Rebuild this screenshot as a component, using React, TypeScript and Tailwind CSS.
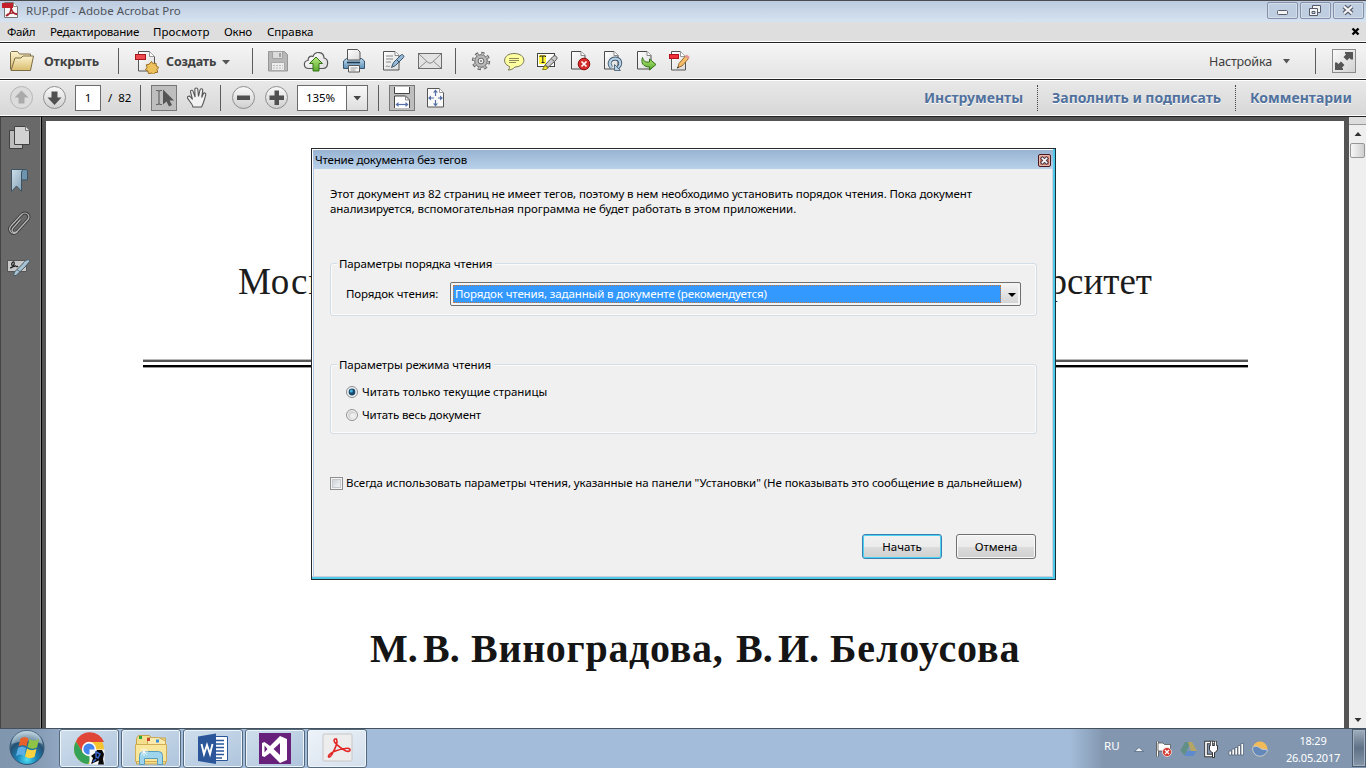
import type { ReactNode } from "react";

function Art({ box, children, className = "" }: { box: [number, number, number, number]; children: ReactNode; className?: string }) {
  return (
    <svg width={box[2]} height={box[3]} viewBox={box.join(" ")} className={"block shrink-0 " + className} fill="none" aria-hidden="true">
      {children}
    </svg>
  );
}

const Sep = ({ className = "" }: { className?: string }) => <div className={"h-[26px] w-px shrink-0 bg-[#5c5c5c] " + className} />;

const Sheet = ({ x, y = 51.5 }: { x: number; y?: number }) => (
  <>
    <path d={`M${x} ${y}h9.5l4 4v13.5h-13.5z`} fill="url(#paper)" stroke="#4a4a4a" />
    <path d={`M${x + 9.5} ${y}v4h4`} fill="#fff" stroke="#8a8a8a" />
  </>
);

const Defs = () => (
  <svg width="0" height="0" className="absolute" aria-hidden="true">
    <defs>
      <linearGradient id="paper" x1="0" y1="0" x2="1" y2="1"><stop stopColor="#fff" /><stop offset="1" stopColor="#dcdcdc" /></linearGradient>
      <linearGradient id="folder" x1="0" y1="0" x2="0" y2="1"><stop stopColor="#fdf3cf" /><stop offset="1" stopColor="#d9bc6d" /></linearGradient>
      <linearGradient id="round" x1="0" y1="0" x2="0" y2="1"><stop stopColor="#fafafa" /><stop offset="1" stopColor="#cfcfcf" /></linearGradient>
      <linearGradient id="steel" x1="0" y1="0" x2="0" y2="1"><stop stopColor="#bcd8ec" /><stop offset="1" stopColor="#5e90b8" /></linearGradient>
      <linearGradient id="green" x1="0" y1="0" x2="0" y2="1"><stop stopColor="#b9ea7e" /><stop offset="1" stopColor="#58a92a" /></linearGradient>
      <linearGradient id="sage" x1="0" y1="0" x2="1" y2="1"><stop stopColor="#cfe0ea" /><stop offset="1" stopColor="#7e9db4" /></linearGradient>
      <radialGradient id="orb" cx=".5" cy=".85" r=".8"><stop stopColor="#4fe0f4" /><stop offset=".35" stopColor="#1b84b8" /><stop offset=".7" stopColor="#245073" /><stop offset="1" stopColor="#a8bfcc" /></radialGradient>
    </defs>
  </svg>
);

function TitleBar() {
  return (
    <header className="flex h-[22px] shrink-0 items-start border-t border-[#4c4c50] bg-gradient-to-b from-[#bccbdf] to-[#d6e3f1]">
      <Art box={[2, 1, 18, 19]} className="ml-[2px]">
        <path d="M4.500 2.500h9l4 4v11h-13z" fill="#f8f8f8" stroke="#777" />
        <path d="M13.500 2.500v4h4" stroke="#888" fill="#fff" />
        <path d="M2 3h11v5h-11z" fill="#c3202b" />
        <path d="M6 16c3-1 5-4 5-8.500c1 5 3 6.500 6 7M6 16c2-3 7-3.500 11-2" stroke="#a5222a" strokeWidth="1.400" />
      </Art>
      <span className="ml-[6px] mt-[1px] text-[11.500px] leading-[18px] tracking-[.06px] text-[#4e535b]">RUP.pdf - Adobe Acrobat Pro</span>
      <div className="ml-auto mr-[2px] mt-[1px] flex gap-[2px]">
        <div className="h-[17px] w-[31px] rounded-[2px] border border-[#8490a8] bg-[#bfcde0] shadow-[inset_0_0_0_1px_#d4deeb]">
          <Art box={[1268, 3, 29, 15]}><rect x="1277.500" y="10.500" width="10" height="4" rx="1" fill="#f4f4f4" stroke="#565c6b" /></Art>
        </div>
        <div className="h-[17px] w-[31px] rounded-[2px] border border-[#8490a8] bg-[#bfcde0] shadow-[inset_0_0_0_1px_#d4deeb]">
          <Art box={[1301, 3, 29, 15]}>
            <path d="M1312.500 5.500h8v7h-8z" fill="#f4f4f4" stroke="#565c6b" />
            <path d="M1309.500 8.500h8v7h-8z" fill="#f4f4f4" stroke="#565c6b" />
            <path d="M1312 11.500h3v2h-3z" fill="#c8d4e4" stroke="#565c6b" />
          </Art>
        </div>
        <div className="h-[17px] w-[31px] rounded-[2px] border border-[#8490a8] bg-[#bfcde0] shadow-[inset_0_0_0_1px_#d4deeb]">
          <Art box={[1334, 3, 29, 15]}>
            <path d="M1344 6.500l8 7M1352 6.500l-8 7" stroke="#565c6b" strokeWidth="4.400" />
            <path d="M1344 6.500l8 7M1352 6.500l-8 7" stroke="#f6f6f6" strokeWidth="2.200" />
          </Art>
        </div>
      </div>
    </header>
  );
}

function MenuBar() {
  return (
    <nav className="flex h-[20px] shrink-0 items-center border-b border-white bg-[#dedede] pl-[7px] text-[11.500px] leading-[18px] text-black">
      <span className="w-[43px] tracking-[-.4px]">Файл</span>
      <span className="w-[103px] tracking-[-.23px]">Редактирование</span>
      <span className="w-[71px] tracking-[.1px]">Просмотр</span>
      <span className="w-[43px] tracking-[-.2px]">Окно</span>
      <span>Справка</span>
      <Art box={[1350, 26, 12, 12]} className="ml-auto mr-[4px]"><path d="M1352.500 28.500l6 6M1358.500 28.500l-6 6" stroke="#000" strokeWidth="2.400" /></Art>
    </nav>
  );
}

function MainToolbar() {
  return (
    <div className="flex h-[38px] shrink-0 items-start border-y border-t-[#222] border-b-[#222] bg-gradient-to-b from-[#f5f5f5] to-[#e4e4e4] pl-[10px] pt-[5px] shadow-[inset_0_1px_0_#fff,inset_0_-1px_0_#fff]">
      <Art box={[10, 48, 24, 26]}>
        <path d="M10.500 69.500v-17l1-1h6l2 2.500h11v4" fill="url(#folder)" stroke="#7d6d45" />
        <path d="M11 70.500l4-12.500h6l2-2h10.500l-3 14.500z" fill="url(#folder)" stroke="#7d6d45" />
      </Art>
      <span className="ml-[10px] w-[58px] text-[12.500px] font-bold leading-[27px] tracking-[-.15px] text-[#404040]">Открыть</span>
      <Sep className="ml-[16px]" />
      <Art box={[135, 48, 24, 26]} className="ml-[16px]">
        <path d="M138.500 51.500h11l5 5v14.500h-16z" fill="url(#paper)" stroke="#555" />
        <path d="M149.500 51.500v5h5" fill="#fff" stroke="#999" />
        <rect x="135.500" y="54.500" width="10" height="5" fill="#ee4a50" stroke="#a6171c" />
        <path d="M151.500 61.500l1.700 2.300 2.800-.6.300 2.900 2.500 1.300-1.800 2.200.7 2.700-2.800.3-1.500 2-2.200-1.600-2.700.8-.6-2.700-2.500-1.300 1.600-2.300-.7-2.700 2.800-.5z" fill="#edc25c" stroke="#9a6e22" />
      </Art>
      <span className="ml-[7px] w-[50px] text-[12.500px] font-bold leading-[27px] tracking-[-.15px] text-[#404040]">Создать</span>
      <Art box={[223, 48, 8, 26]} className="ml-[6px]"><path d="M223 60h8l-4 4.500z" fill="#555" /></Art>
      <Sep className="ml-[22px]" />
      <Art box={[267, 48, 22, 26]} className="ml-[14px]">
        <path d="M268.500 51.500h16l3 3v16.500h-19z" fill="#b7b7b7" stroke="#979797" />
        <path d="M272.500 51.500h10v7h-10z" fill="#dcdcdc" stroke="#a2a2a2" /><path d="M279 53h2v4h-2z" fill="#a2a2a2" />
        <path d="M271.500 62.500h13v8h-13z" fill="#ededed" stroke="#a8a8a8" /><path d="M273 65.500h10M273 68h10" stroke="#bbb" strokeDasharray="2 1" />
      </Art>
      <Art box={[303, 48, 26, 26]} className="ml-[14px]">
        <path d="M309 68.500c-6 0-6-7.500-1-8c0-4 3-5 5-4c2-6 11-5 11 1.500c5 1 5 10-1 10.500z" fill="url(#paper)" stroke="#555" strokeWidth="1.200" />
        <path d="M316 57l6.500 6.500h-3.500v7.500h-6v-7.500h-3.500z" fill="url(#green)" stroke="#35741b" />
      </Art>
      <Art box={[342, 48, 25, 26]} className="ml-[13px]">
        <path d="M343.500 61l3-2.500h15l3 2.500v7.500h-21z" fill="url(#steel)" stroke="#355570" />
        <path d="M347.500 49.500h10l2.500 2.500v8h-12.500z" fill="url(#paper)" stroke="#555" />
        <path d="M347 62.500h13" stroke="#22384b" strokeWidth="1.600" />
        <path d="M348.500 65.500h11v6.500h-11z" fill="#f7f7f7" stroke="#555" /><path d="M350.500 68h7M350.500 70h5" stroke="#999" />
      </Art>
      <Art box={[382, 48, 23, 26]} className="ml-[15px]">
        <path d="M383.500 51.500h11.500l4 4v14.500h-15.500z" fill="url(#paper)" stroke="#555" />
        <path d="M395 51.500v4h4" fill="#fff" stroke="#888" />
        <path d="M386 56h7M386 59h7M386 62h5M386 67c1-3 2 1 4-1" stroke="#888" />
        <path d="M391.500 67.500l2-5 8-8c2 0 3 2 2 3l-8 8z" fill="#94b8d8" stroke="#3e5468" /><path d="M396.500 59.500l3 3" stroke="#3e5468" />
      </Art>
      <Art box={[417, 48, 26, 26]} className="ml-[12px]">
        <rect x="418.500" y="53.500" width="23" height="15" fill="#e3e3e3" stroke="#6d6d6d" />
        <path d="M419 54l9 8.500q2 1.500 4 0l9-8.500M419 68l8-7M441 68l-8-7" stroke="#8b8b8b" />
      </Art>
      <Sep className="ml-[12px]" />
      <Art box={[471, 48, 20, 26]} className="ml-[15px]">
        <circle cx="481" cy="61" r="7.800" stroke="#666" strokeWidth="2.800" strokeDasharray="3.200 2.926" />
        <circle cx="481" cy="61" r="6.300" fill="#b9b9b9" stroke="#666" />
        <circle cx="481" cy="61" r="7.200" stroke="#b9b9b9" strokeWidth="2" strokeDasharray="2 3.655" strokeDashoffset="-.5" />
        <circle cx="481" cy="61" r="2.900" fill="#eee" stroke="#666" /><circle cx="481" cy="61" r="1" fill="#777" />
      </Art>
      <Art box={[503, 48, 22, 26]} className="ml-[12px]">
        <path d="M514 53.500c13 0 13 13 1 13.500c-2 2-4 3-7 3c1-1 2-2 1.500-3.500c-8-3-6-13 4.500-13z" fill="#ffffa0" stroke="#777555" />
        <path d="M509 58.500h10M509 60.500h10M509 62.500h7" stroke="#8c8858" />
      </Art>
      <Art box={[536, 48, 22, 26]} className="ml-[11px]">
        <rect x="537.500" y="53.500" width="17" height="13" fill="#fff" stroke="#444" /><path d="M539 55h7v9h-7z" fill="#fff338" />
        <path d="M540 57v-1h5.500v1M542.800 56v6.500M541.500 62.500h3" stroke="#222" />
        <path d="M544.500 65.500l8-8.500c2-3 6 0 4 2.500l-8.500 8z" fill="#c9c9c9" stroke="#555" /><path d="M545 64.500l4 3.500M551 58.500l4 3.500" stroke="#666" />
        <path d="M542.500 69.500l2.500-4 3 2.500-2 1.500z" fill="#f5e52a" stroke="#8a821f" />
      </Art>
      <Art box={[570, 48, 21, 26]} className="ml-[12px]">
        <Sheet x={571.5} />
        <circle cx="584" cy="64" r="5.800" fill="#d82b2b" stroke="#8d1111" /><path d="M581.500 61.500l5 5M586.500 61.500l-5 5" stroke="#fff" strokeWidth="1.700" />
      </Art>
      <Art box={[603, 48, 20, 26]} className="ml-[12px]">
        <Sheet x={604.5} />
        <path d="M611.500 67.500c-4-4-1-9 4-9c5 .5 6.500 5.500 2.500 9" stroke="#3e566c" strokeWidth="3.800" />
        <path d="M611.500 67.500c-4-4-1-9 4-9c5 .5 6.500 5.500 2.500 9" stroke="#b8d2e8" strokeWidth="2" />
        <path d="M614.500 64.500v6h6z" fill="#b8d2e8" stroke="#3e566c" strokeWidth=".8" />
      </Art>
      <Art box={[636, 48, 21, 26]} className="ml-[13px]">
        <Sheet x={637.5} />
        <path d="M642.500 57.500c1 4 3 5 7 4.500v-3l6.500 5.500-6.500 5.500v-3c-6 0-9-4-7-9.500z" fill="url(#green)" stroke="#2f7018" />
      </Art>
      <Art box={[668, 48, 22, 26]} className="ml-[11px]">
        <path d="M671.500 51.500h9l5 5v13.500h-14z" fill="url(#paper)" stroke="#555" /><path d="M680.500 51.500v5h5" fill="#fff" stroke="#999" />
        <rect x="669.500" y="54.500" width="9" height="4" fill="#ee3038" stroke="#b3141b" />
        <path d="M678 67.500l1-4 6.500-7.500 3 2.500-6.500 7.500z" fill="#f6bd6b" stroke="#9c6a2e" /><path d="M686 55.500l3 2.500" stroke="#e6969b" strokeWidth="2.500" /><path d="M677 68.500l2-.5-1.500-1.500z" fill="#222" />
      </Art>
      <span className="ml-auto text-[12.500px] leading-[27px] tracking-[-.15px] text-[#3c3c3c]">Настройка</span>
      <Art box={[1282, 48, 9, 26]} className="ml-[10px]"><path d="M1283 59h7l-3.500 4.500z" fill="#555" /></Art>
      <Sep className="ml-[24px]" />
      <div className="ml-[16px] mr-[10px] mt-[1px] size-[24px] border border-[#8a8a8a] bg-gradient-to-br from-[#fafafa] to-[#d2d2d2]">
        <Art box={[1333, 50, 22, 22]}>
          <path d="M1345 52h8v7.500h-2l-1.500-1.500-2.500 2.500-3.500-3.500 2.500-2.500-1-1z" fill="#555" />
          <path d="M1335 62.500h2l1.500 1.500 2.500-2.500 3.500 3.500-2.500 2.500 1 1v1.500h-8z" fill="#555" />
        </Art>
      </div>
    </div>
  );
}

const PaneLink = ({ children, className = "" }: { children: ReactNode; className?: string }) => (
  <span className={"whitespace-nowrap text-[14px] font-bold leading-[25px] text-[#50719d] [text-shadow:0_1px_0_#fff] " + className}>{children}</span>
);

function PageToolbar() {
  return (
    <div className="flex h-[37px] shrink-0 items-start border-b border-[#222] bg-gradient-to-b from-[#e9e9e9] to-[#d7d7d7] pl-[9px] pt-[5px] text-[11.500px] text-black shadow-[inset_0_1px_0_#fff,inset_0_-1px_0_#fff]">
      <Art box={[9, 85, 25, 26]}>
        <circle cx="21.500" cy="97.500" r="11" fill="#dcdcdc" stroke="#b5b5b5" /><path d="M21.500 90.500l7 7h-4v6h-6v-6h-4z" fill="#aaa" />
      </Art>
      <Art box={[42, 85, 25, 26]} className="ml-[8px]">
        <circle cx="54.500" cy="97.500" r="11" fill="url(#round)" stroke="#8e8e8e" /><path d="M54.500 105l7-7.500h-4v-6h-6v6h-4z" fill="#505050" />
      </Art>
      <div className="ml-[8px] h-[26px] w-[26px] border border-[#6b6b6b] bg-white text-center leading-[24px]">1</div>
      <span className="ml-[7px] w-[33px] whitespace-pre leading-[26px]">/  82</span>
      <Sep className="-ml-px" />
      <div className="ml-[10px] size-[26px] border border-[#777] bg-[#bebebe]">
        <Art box={[152, 86, 24, 24]}>
          <path d="M156 90.500h2l1 1 1-1h2M156 104.500h2l1-1 1 1h2M159 91v13" stroke="#666" strokeWidth="1.200" />
          <path d="M163 89.500v15l3.500-3 2.500 5 3-1.500-2.500-4.500h4.500z" fill="#555" />
        </Art>
      </div>
      <Art box={[186, 85, 22, 26]} className="ml-[9px]">
        <path d="M193 107c-1-4-4-6-5.500-9c-.5-2 2-2.500 3-1l2 2.500l-2-7.500c-.3-2 2-2.500 2.600-.6l2 5.600l-.3-7.500c0-2 2.700-2 3 0l.7 7l1.500-6.500c.4-2 3-1.500 2.700.5l-1 7l1.500-3.500c.8-2 3-1 2.500.8c-1 4-2 8-4.200 12.200z" fill="#f2f2f2" stroke="#555" strokeWidth="1.100" />
      </Art>
      <Sep className="ml-[12px]" />
      <Art box={[231, 85, 25, 26]} className="ml-[10px]">
        <circle cx="243.500" cy="97.500" r="11" fill="url(#round)" stroke="#8e8e8e" /><path d="M237 95.500h13v4.500h-13z" fill="#505050" />
      </Art>
      <Art box={[264, 85, 25, 26]} className="ml-[8px]">
        <circle cx="276.500" cy="97.500" r="11" fill="url(#round)" stroke="#8e8e8e" /><path d="M269.500 95.500h5v-5h4.500v5h5v4.500h-5v5h-4.500v-5h-5z" fill="#505050" />
      </Art>
      <div className="ml-[8px] flex h-[26px] w-[71px] border border-[#6b6b6b] bg-white">
        <span className="w-[48px] pl-[8px] leading-[24px] tracking-[-.1px]">135%</span>
        <div className="flex flex-1 border-l border-[#6b6b6b] bg-gradient-to-b from-[#f8f8f8] to-[#dedede]">
          <Art box={[346, 86, 20, 24]}><path d="M352.500 96h7.500l-3.700 4.500z" fill="#444" /></Art>
        </div>
      </div>
      <Sep className="ml-[10px]" />
      <div className="ml-[10px] size-[26px] border border-[#777] bg-[#bebebe]">
        <Art box={[390, 86, 24, 24]}>
          <path d="M394.500 87v6.500h15v-6.500" fill="#fff" stroke="#444" /><path d="M394.500 108v-12h11l4 4v8" fill="#fff" stroke="#444" /><path d="M405.500 96v4h4" stroke="#888" />
          <path d="M396 104.500h12" stroke="#5670a8" strokeWidth="1.200" /><path d="M395.500 104.500l3-2.500v5zM408.500 104.500l-3-2.500v5z" fill="#5670a8" />
        </Art>
      </div>
      <Art box={[425, 85, 21, 26]} className="ml-[10px]">
        <path d="M427.500 88.500h12l4 4v14.500h-16z" fill="#fafafa" stroke="#555" /><path d="M439.500 88.500v4h4" stroke="#999" fill="#fff" />
        <path d="M435.500 91v5M435.500 100v5M430 98h4M438 98h4" stroke="#5670a8" strokeWidth="1.200" />
        <path d="M435.500 89.500l-2.500 3h5zM435.500 106.500l-2.500-3h5zM428 98l3-2.500v5zM443 98l-3-2.500v5z" fill="#5670a8" />
      </Art>
      <div className="ml-auto mr-[14px] flex">
        <PaneLink>Инструменты</PaneLink>
        <div className="ml-[14px] h-[26px] border-l border-dotted border-[#444]" />
        <PaneLink className="ml-[14px] tracking-[-.05px]">Заполнить и подписать</PaneLink>
        <div className="ml-[14px] h-[26px] border-l border-dotted border-[#444]" />
        <PaneLink className="ml-[14px]">Комментарии</PaneLink>
      </div>
    </div>
  );
}

function SidePanel() {
  return (
    <aside className="w-[42px] shrink-0 border-l border-r border-l-[#444] border-r-black bg-[#696969] shadow-[inset_-1px_0_0_#909090]">
      <Art box={[1, 117, 39, 170]}>
        <path d="M9.500 130.500h13v18h-13z" fill="#bdbdbd" stroke="#414141" />
        <path d="M14.500 126.500h11l4 4v14h-15z" fill="#d2d2d2" stroke="#414141" /><path d="M25.500 126.500v4h4" fill="#e5e5e5" stroke="#777" />
        <path d="M21.500 169.500h5l1 1.500v9h-7z" fill="#6d93ad" stroke="#3d5464" />
        <path d="M11.500 169.500h12q-2 1-2 3v19l-5-5.500-5 5.500z" fill="url(#sage)" stroke="#3f5462" />
        <path d="M10.500 231.500c-1.500-2-1-4 1-6l10-11c2-2 5-2 6.500 0s1 4-.5 5.500l-10 11c-2 2-5 2-5.500-.5l.5-2 8-9M10.500 231.500c2 3 5 2 7 0" stroke="#393939" strokeWidth="3" />
        <path d="M10.500 231.500c-1.500-2-1-4 1-6l10-11c2-2 5-2 6.500 0s1 4-.5 5.500l-10 11c-2 2-5 2-5.500-.5l.5-2 8-9M10.500 231.500c2 3 5 2 7 0" stroke="#b9b9b9" strokeWidth="1.200" />
        <path d="M7.500 260.500h19v11h-19z" fill="#c9c9c9" stroke="#555" />
        <path d="M10 268c5-1 5-7 3-6c-3 2 0 6 2 4c1-1 1 2 3 0" stroke="#222" strokeWidth="1.200" />
        <path d="M13.500 275.500l1-3.500 8-8c3-5 8-5 7-2.500l-4.500 5.500-9 8.500z" fill="#a9c2d2" stroke="#495b67" /><path d="M17 269.500l4 3" stroke="#566b79" />
      </Art>
    </aside>
  );
}

function DocumentPage() {
  return (
    <main className="mt-[4px] flex w-[1298px] shrink-0 flex-col bg-white font-['Liberation_Serif',serif] text-[#151515]">
      <div className="mt-[139px] flex h-[44px] justify-between pl-[192px] pr-[192px] text-[37px] leading-[44px] text-[#1c1c1c]">
        <span className="tracking-[.8px]">Моск</span>
        <span>рситет</span>
      </div>
      <div className="ml-[97px] mt-[55px] h-px w-[1105px] bg-[#b8b8b8]" />
      <div className="ml-[97px] h-[7px] w-[1105px] border-y-2 border-t-[#555] border-b-black bg-white" />
      <div className="ml-[97px] h-px w-[1105px] bg-[#999]" />
      <div className="mt-[258px] flex h-[46px] whitespace-nowrap pl-[324px] text-[40px] font-bold leading-[46px]">
        <span className="w-[53px]">М.</span>
        <span className="w-[48px]">В.</span>
        <span className="w-[265px] tracking-[.7px]">Виноградова,</span>
        <span className="w-[42px]">В.</span>
        <span className="w-[52px]">И.</span>
        <span className="tracking-[.9px]">Белоусова</span>
      </div>
    </main>
  );
}

function ScrollBar() {
  return (
    <div className="ml-[5px] flex w-[17px] shrink-0 flex-col bg-[#efefef]">
      <div className="h-[8px] border-b border-[#999] bg-[#ddd]" />
      <Art box={[1349, 125, 17, 17]}><path d="M1354.500 136h7l-3.500-4z" fill="#333" /></Art>
      <div className="ml-[1px] mt-[1px] h-[15px] w-[15px] rounded-[2px] border border-[#979797] bg-gradient-to-r from-[#f6f6f6] to-[#cfcfcf]" />
      <Art box={[1349, 711, 17, 17]} className="mt-auto"><path d="M1354.500 718h7l-3.500 4z" fill="#333" /></Art>
    </div>
  );
}

const Group = ({ title, titleClass, className, children }: { title: string; titleClass: string; className: string; children: ReactNode }) => (
  <section className={"relative rounded-[3px] border border-[#d3dde6] shadow-[inset_0_0_0_1px_#fbfbfb] " + className}>
    <h2 className={"absolute -top-[8px] left-[6px] bg-[#f0f0f0] pl-[2px] pr-[3px] leading-[16px] " + titleClass}>{title}</h2>
    {children}
  </section>
);

function ReadingDialog() {
  return (
    <div role="dialog" className="absolute left-[311px] top-[148px] flex h-[432px] w-[745px] flex-col whitespace-nowrap border border-[#26292c] border-r-[#16303a] bg-[#f0f0f0] text-[11.500px] text-black shadow-[inset_-2px_-2px_0_#4fc9ea,inset_-3px_-3px_0_#cfcfda,inset_1px_0_0_#fff,inset_2px_0_0_#b7cde4]">
      <div className="ml-px mr-[2px] flex h-[20px] shrink-0 items-center border-t border-white bg-gradient-to-b from-[#98b4d2] to-[#b9d1ea] pl-[2px] pt-[1px]">
        <span className="leading-[18px] tracking-[-.2px]">Чтение документа без тегов</span>
        <div className="ml-auto mr-[2px] size-[13px] rounded-[2px] border border-[#4c171b] bg-gradient-to-b from-[#dfa79b] via-[#c36352] to-[#d08c7c] shadow-[inset_0_0_0_1px_#e7b9af]">
          <Art box={[0, 0, 11, 11]}><path d="M3.500 3.500l4 4M7.500 3.500l-4 4" stroke="#4d3d4c" strokeWidth="3.600" strokeLinecap="square" /><path d="M3.500 3.500l4 4M7.500 3.500l-4 4" stroke="#fff" strokeWidth="1.700" strokeLinecap="square" /></Art>
        </div>
      </div>
      <p className="ml-[18px] mt-[17px] h-[30px] leading-[15px]">
        <span className="block tracking-[-.11px]">Этот документ из 82 страниц не имеет тегов, поэтому в нем необходимо установить порядок чтения. Пока документ</span>
        <span className="block tracking-[-.06px]">анализируется, вспомогательная программа не будет работать в этом приложении.</span>
      </p>
      <Group title="Параметры порядка чтения" titleClass="tracking-[-.12px]" className="ml-[18px] mt-[47px] flex h-[53px] w-[707px] items-start pl-[15px] pt-[18px]">
        <label className="w-[104px] leading-[24px] tracking-[-.12px]">Порядок чтения:</label>
        <div className="flex h-[24px] w-[571px] rounded-[2px] border border-[#707070] bg-[#f4f4f4] p-[2px]">
          <div className="h-[18px] w-[548px] bg-[#3399ff] outline-1 -outline-offset-1 outline-dotted outline-[#c97436]">
            <span className="block pl-[2px] leading-[18px] tracking-[-.13px] text-white">Порядок чтения, заданный в документе (рекомендуется)</span>
          </div>
          <Art box={[0, 0, 17, 18]} className="bg-gradient-to-b from-[#f2f2f2] to-[#d4d4d4]"><path d="M7 8h8l-4 4z" fill="#000" /></Art>
        </div>
      </Group>
      <Group title="Параметры режима чтения" titleClass="tracking-[-.07px]" className="ml-[18px] mt-[48px] h-[70px] w-[707px] pl-[15px] pt-[19px]">
        <label className="flex h-[16px] items-center leading-[16px] tracking-[-.05px]">
          <Art box={[0, 0, 12, 12]} className="mr-[4px]"><circle cx="6" cy="6" r="5.500" fill="#f4f4f4" stroke="#858a8f" /><circle cx="6" cy="6" r="3.400" fill="#194a6e" /><circle cx="5.300" cy="5" r="1.600" fill="#43b5df" /></Art>
          Читать только текущие страницы
        </label>
        <label className="mt-[7px] flex h-[16px] items-center leading-[16px] tracking-[-.16px]">
          <Art box={[0, 0, 12, 12]} className="mr-[4px]"><circle cx="6" cy="6" r="5.500" fill="#f4f4f4" stroke="#8e8f8f" /><circle cx="6" cy="6" r="4" fill="#d5d5d8" /><circle cx="7" cy="7" r="2.800" fill="#eee" /></Art>
          Читать весь документ
        </label>
      </Group>
      <label className="ml-[18px] mt-[41px] flex h-[16px] items-center leading-[16px] tracking-[-.08px]">
        <span className="mr-[3px] size-[13px] border border-[#8e8f8f] bg-[#f4f4f4] p-[1px]"><span className="block size-full border border-[#c6cacf] bg-gradient-to-br from-[#cfd3d8] to-[#f4f4f4]" /></span>
        Всегда использовать параметры чтения, указанные на панели "Установки" (Не показывать это сообщение в дальнейшем)
      </label>
      <div className="ml-[550px] mt-[43px] flex gap-[14px]">
        <button className="h-[25px] w-[80px] rounded-[3px] border border-[#3c7fb1] bg-[linear-gradient(#f2f2f2,#ebebeb_50%,#dddddd_50%,#cfcfcf)] pt-px shadow-[inset_0_0_0_1px_#48d3f4]">Начать</button>
        <button className="h-[25px] w-[80px] rounded-[3px] border border-[#707070] bg-[linear-gradient(#f2f2f2,#ebebeb_50%,#dddddd_50%,#cfcfcf)] pt-px shadow-[inset_0_0_0_1px_#fafafa]">Отмена</button>
      </div>
    </div>
  );
}

const TaskButton = ({ active = false, children }: { active?: boolean; children: ReactNode }) => (
  <div className={(active ? "from-[#eef3f9] to-[#d3dfec]" : "from-[#cfdeec] to-[#aec4dc]") + " h-[39px] w-[60px] rounded-[3px] border border-[#54687e] bg-gradient-to-br shadow-[inset_0_0_0_1px_#edf4fa]"}>{children}</div>
);

function Taskbar() {
  return (
    <footer className="flex h-[40px] shrink-0 items-start border-t border-[#46515e] bg-[#a3bcd9]">
      <div className="h-full w-[59px] bg-gradient-to-r from-[#8095ae] via-[#8297b0] to-[#91a7c1]">
        <Art box={[0, 729, 56, 39]}>
          <circle cx="27" cy="747.500" r="17" fill="url(#orb)" stroke="#315573" />
          <path d="M11.500 744c2-18 29-18 31 0c-9-4-22-3-31 0z" fill="#d8e8ef" opacity=".4" />
          <path d="M20.500 738.500q4-3 8 0l-2 8q-4-2.500-8 0z" fill="#e6612b" /><path d="M29.500 739q5 3 9.500 0l-2 8.500q-4.500 2.500-9.500-.5z" fill="#8fc345" />
          <path d="M18 748q4-3 8 0l-2 8q-3-3-8 0z" fill="#5daee4" /><path d="M27 748.500q4.500 3 9.500.5l-2 8q-5 2.500-9.500-.5z" fill="#fbd23f" />
        </Art>
      </div>
      <div className="flex gap-[2px]">
        <TaskButton>
          <Art box={[60, 729, 58, 38]}>
            <circle cx="89" cy="748" r="15" fill="#f4c430" />
            <path d="M76 740.500a15 15 0 0 1 28 .5h-15l-6 11z" fill="#df4637" /><path d="M76 740.500a15 15 0 0 0 12 22.500l7-12-12 1z" fill="#35a257" />
            <circle cx="89" cy="748" r="7.200" fill="#fff" /><circle cx="89" cy="748" r="5.600" fill="#4387ee" />
            <path d="M89.500 748.500h15v15h-15z" fill="#f8f8f8" /><path d="M91 763l2-6-2-2 4-3 2-3h5l2 4-1 5 1 5.500h-6l1-4z" fill="#090909" /><path d="M96 751l4 2-2 4-2-1zM93 761l3-3" stroke="#3c66cb" strokeWidth="1.500" />
          </Art>
        </TaskButton>
        <TaskButton>
          <Art box={[122, 729, 58, 38]}>
            <path d="M136.500 737.500l2-3h11l2 2.500h14v26h-29z" fill="#f5df8c" stroke="#c5a34c" /><path d="M139 735h3v3h-3z" fill="#2ca93e" /><path d="M147.500 736.500h11l7 3.500v20h-18z" fill="#faebad" stroke="#c9aa56" />
            <path d="M147 737h3v3h-3z" fill="#c9432d" /><path d="M156 738.500h3v3h-3z" fill="#378fd6" />
            <path d="M135.500 743.500h31v17h-31z" fill="#f8e69d" stroke="#d1ae56" />
            <path d="M139.500 763.500v-9q0-4 4-4h15q4 0 4 4v9h-5v-6h-13v6z" fill="#9ed4ec" stroke="#5a9ebd" /><path d="M144 747v8M140 751h8M141 748l6 6M147 748l-6 6" stroke="#fff" strokeWidth=".8" />
          </Art>
        </TaskButton>
        <TaskButton>
          <Art box={[184, 729, 58, 38]}>
            <path d="M211.500 735.500h16v24h-16z" fill="#fff" stroke="#2b579a" /><path d="M214 739.500h10M214 743h10M214 746.500h10M214 750h10M214 753.500h10M214 757h8" stroke="#2b579a" strokeWidth="1.600" />
            <path d="M198 735.500l18-3v30.500l-18-3z" fill="#2b579a" /><path d="M201.500 743l2.500 10 3-9 3 9 2.500-10" stroke="#fff" strokeWidth="1.900" />
          </Art>
        </TaskButton>
        <TaskButton>
          <Art box={[246, 729, 58, 38]}>
            <path d="M259 732h32v31h-32z" fill="#68217a" /><path d="M280 735l7 3v21l-7 3-10-10-5.500 4-2.500-1v-13l2.500-1 5.500 4zM280 742l-6.500 6 6.500 6zM264.500 744.500v7l3-3.500z" fill="#fff" fillRule="evenodd" />
          </Art>
        </TaskButton>
        <TaskButton active>
          <Art box={[308, 729, 58, 38]}>
            <rect x="323" y="733" width="29" height="27" rx="1" fill="#ededed" stroke="#c7c7c7" />
            <path d="M335 738c-4 2 5 9 11 12c5 2 6-4-1-2.500c-7 1-15 4-16.500 7.500c-.5 2 2 1 3-1c3-5 7-12 5-16z" stroke="#e12624" strokeWidth="1.600" />
          </Art>
        </TaskButton>
      </div>
      <div className="ml-auto flex h-full w-[296px] items-start bg-gradient-to-r from-[#a3bcd9] to-[#8296af] to-[34px] text-white">
        <span className="ml-[34px] mt-[8px] w-[30px] text-[11.500px] leading-[18px]">RU</span>
        <Art box={[1134, 729, 140, 38]}>
          <path d="M1134.500 751.500l4.500-4 4.500 4z" fill="#f2f5f8" stroke="#4b6079" strokeWidth=".7" />
          <path d="M1157.500 741.500v15" stroke="#333" strokeWidth="3" /><path d="M1157.500 741.500v15" stroke="#fff" strokeWidth="1.500" />
          <path d="M1158 743h5l1.500 1.500h6v8h-6l-1.500-1.500h-5z" fill="#fff" stroke="#555" strokeWidth=".8" />
          <circle cx="1167" cy="752" r="4.500" fill="#d3352c" stroke="#fff" strokeWidth=".7" /><path d="M1165 750l4 4M1169 750l-4 4" stroke="#fff" strokeWidth="1.400" />
          <path d="M1185 742h6l-6.500 13.500-4-5z" fill="#628f85" /><path d="M1188 742h4l5 9h-6z" fill="#b6a665" /><path d="M1187 751h9.500l-3 5h-9z" fill="#5d8bce" />
          <path d="M1214 742.500h-8v13h8" stroke="#333" strokeWidth="3.400" /><path d="M1214 742.500h-8v13h8" stroke="#fff" strokeWidth="1.700" />
          <path d="M1211.500 741v4M1215.500 741v4" stroke="#333" strokeWidth="3" /><path d="M1209.500 745.500h8v4q-1 3-3 3v5h-2v-5q-2 0-3-3z" fill="#fff" stroke="#333" /><path d="M1211.500 741.500v4.500M1215.500 741.500v4.500" stroke="#fff" strokeWidth="1.400" />
          <path d="M1229 751h2.500v4h-2.500zM1232 749h2.500v6h-2.500zM1235 747.500h2.500v7.500h-2.500zM1238 745.500h2.500v9.500h-2.500zM1241 743.500h2.500v11.500h-2.500z" fill="#fff" stroke="#4d5c6f" strokeWidth=".7" />
          <circle cx="1260" cy="749" r="7.500" fill="#f2bb58" /><path d="M1252.500 748c3-4 7 0 9 1s4 0 6 1c-2 8-14 9-15-2z" fill="#6488b9" stroke="#c5d6e8" strokeWidth=".8" />
        </Art>
        <div className="ml-[10px] mt-[3px] w-[58px] text-center text-[11px] leading-[17px] tracking-[-.2px]">
          <div>18:29</div>
          <div>26.05.2017</div>
        </div>
        <div className="ml-auto h-[38px] w-[14px] border border-[#4b5d70] bg-gradient-to-b from-[#a1aebc] via-[#5e7186] to-[#8797aa] shadow-[inset_0_0_0_1px_#a6b2c0]" />
      </div>
    </footer>
  );
}

export default function App() {
  return (
    <div className="relative flex h-[768px] w-[1366px] flex-col overflow-hidden bg-[#545454] font-['Noto_Sans','Open_Sans',sans-serif]">
      <Defs />
      <TitleBar />
      <MenuBar />
      <MainToolbar />
      <PageToolbar />
      <div className="flex min-h-0 flex-1">
        <SidePanel />
        <div className="w-[4px] shrink-0" />
        <DocumentPage />
        <ScrollBar />
      </div>
      <Taskbar />
      <ReadingDialog />
    </div>
  );
}
